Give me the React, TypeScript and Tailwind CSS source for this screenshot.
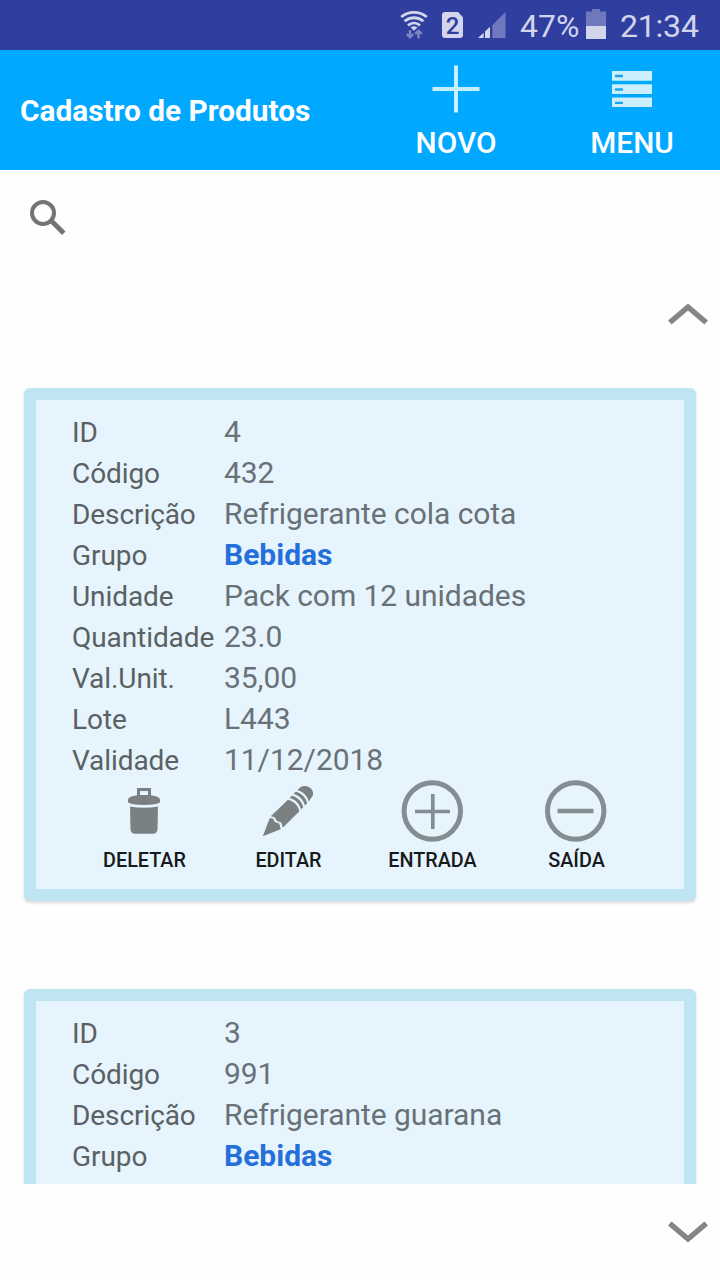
import type { ReactNode } from 'react';

type Product = {
  id: string;
  codigo: string;
  descricao: string;
  grupo: string;
  unidade?: string;
  quantidade?: string;
  valorUnitario?: string;
  lote?: string;
  validade?: string;
};

const products: Product[] = [
  {
    id: '4',
    codigo: '432',
    descricao: 'Refrigerante cola cota',
    grupo: 'Bebidas',
    unidade: 'Pack com 12 unidades',
    quantidade: '23.0',
    valorUnitario: '35,00',
    lote: 'L443',
    validade: '11/12/2018',
  },
  {
    id: '3',
    codigo: '991',
    descricao: 'Refrigerante guarana',
    grupo: 'Bebidas',
  },
];

const fields: { key: keyof Product; label: string }[] = [
  { key: 'id', label: 'ID' },
  { key: 'codigo', label: 'Código' },
  { key: 'descricao', label: 'Descrição' },
  { key: 'grupo', label: 'Grupo' },
  { key: 'unidade', label: 'Unidade' },
  { key: 'quantidade', label: 'Quantidade' },
  { key: 'valorUnitario', label: 'Val.Unit.' },
  { key: 'lote', label: 'Lote' },
  { key: 'validade', label: 'Validade' },
];

function StatusBar() {
  return (
    <div className="flex h-[50px] shrink-0 items-center justify-end bg-[#303f9f] pr-[21px] text-[32px] text-[#d2d5ec]">
      <svg width="28" height="30" viewBox="0 0 28 30" fill="none" className="mr-[14px]">
        <g stroke="#d2d5ec" strokeWidth="2.8">
          <path d="M1.2 7C8.500 .8 19.500 .8 26.800 7" />
          <path d="M4.600 11.200c5.400-4.600 13.400-4.600 18.800 0" />
          <path d="M8 15.400c3.600-3 8.400-3 12 0" />
        </g>
        <path d="M10.600 17.400c2-1.600 4.800-1.600 6.800 0L14 20.800z" fill="#d2d5ec" />
        <g stroke="#7d86c4" strokeWidth="2.400">
          <path d="M10 20v7M6.700 24l3.300 3.400 3.300-3.400" />
          <path d="M18.500 28.500v-7M15.200 24l3.300-3.400 3.300 3.400" />
        </g>
      </svg>
      <div className="mr-[15px] flex h-[26px] w-[21px] items-center justify-center rounded-[3px] bg-[#d2d5ec] pt-0.5 text-[24px] font-medium text-[#303f9f] [clip-path:polygon(0_0,76%_0,100%_20%,100%_100%,0_100%)]">
        2
      </div>
      <svg width="28" height="26" viewBox="0 0 28 26" className="mr-[14px]">
        <path d="M14.300 13.200 27.500 0v26H14.300z" fill="#7079bd" />
        <path d="M0 26l5.600-5.200V26zM7 19.600l5-4.800V26H7z" fill="#d2d5ec" />
      </svg>
      <span className="mt-px w-[59px] leading-none whitespace-nowrap">47%</span>
      <svg width="20" height="30" viewBox="0 0 20 30" className="mt-[-2px] mr-[14px] ml-[7px]">
        <path d="M6 0h8v2.500h6V17H0V2.500h6z" fill="#7079bd" />
        <path d="M0 17h20v13H0z" fill="#d2d5ec" />
      </svg>
      <span className="mt-px w-[79px] leading-none tracking-[-0.2px]">21:34</span>
    </div>
  );
}

function HeaderButton({ label, children }: { label: string; children: ReactNode }) {
  return (
    <button className="flex h-full w-44 flex-col items-center text-[29.8px] font-medium text-white">
      <span className="flex h-[78px] items-center">{children}</span>
      <span className="leading-[30px]">{label}</span>
    </button>
  );
}

function Header() {
  return (
    <header className="flex h-[120px] shrink-0 items-center bg-[#00a9ff]">
      <h1 className="flex-1 pt-0.5 pl-5 text-[29.8px] font-bold whitespace-nowrap text-white">Cadastro de Produtos</h1>
      <HeaderButton label="NOVO">
        <svg width="48" height="48" viewBox="0 0 48 48" stroke="#c5f0fc" strokeWidth="4">
          <path d="M24 .5v47M.5 24h47" />
        </svg>
      </HeaderButton>
      <HeaderButton label="MENU">
        <svg width="40" height="36" viewBox="0 0 40 36">
          <path d="M0 0h40v9.700H0zM0 13.200h40v9.800H0zM0 26.500h40V36H0z" fill="#cceffc" />
          <path d="M3 5h8M3 18.500h8M3 31.800h8" stroke="#18a5ed" strokeWidth="2.300" />
        </svg>
      </HeaderButton>
    </header>
  );
}

function ActionButton({ label, children }: { label: string; children: ReactNode }) {
  return (
    <button className="flex w-36 flex-col items-center text-[19.8px] font-medium text-[#17191b]">
      <span className="flex h-[62px] items-center">{children}</span>
      <span className="mt-[7px] pl-px leading-6">{label}</span>
    </button>
  );
}

function ProductCard({ product }: { product: Product }) {
  return (
    <article className="h-[513px] shrink-0 rounded-md border-12 border-[#bfe5f2] bg-[#e6f5fd] pt-[11px] pl-9 shadow-[0_2px_3px_rgba(0,0,0,0.15)]">
      {fields.map(({ key, label }) => (
        <div key={key} className="flex h-[41px] items-center">
          <span className="w-[152px] pt-0.5 text-[28px] tracking-[-0.08px] text-[#5b6063]">{label}</span>
          <span
            className={
              key === 'grupo'
                ? 'text-[30px] font-bold text-[#256fd8]'
                : 'text-[30px] tracking-[-0.05px] text-[#697177]'
            }
          >
            {product[key]}
          </span>
        </div>
      ))}
      <div className="flex">
        <ActionButton label="DELETAR">
          <svg width="32" height="46" viewBox="0 0 32 46" fill="#7b8083">
            <path d="M9 8V0h14v8h-3V3h-8v5z" />
            <path d="M0 12C0 8.500 6 7 16 7s16 1.500 16 5v2.500C28 16.300 22 17 16 17S4 16.300 0 14.500z" />
            <path d="M2 18.500c8 1.600 20 1.600 28 0l-.5 23c-.2 2.800-2 4.300-4.600 4.300H7.100c-2.600 0-4.400-1.500-4.600-4.300z" />
          </svg>
        </ActionButton>
        <ActionButton label="EDITAR">
          <svg width="52" height="52" viewBox="0 0 52 52" fill="#7b8083">
            <path d="M.8 51.300 7.800 33l3.400.8 1.500 3.100 4.500 1.500 1.500 5.800z" />
            <path
              d="M9.500 31 26 15.300c5.500 1.200 9.600 5.200 11 11L21 42l-1.300-4.700-4.800-1.700-1.700-3.600z"
              stroke="#7b8083"
              strokeWidth=".9"
            />
            <path d="M27.500 13 29.800 10.700c5.500 1.200 10.200 5.700 11.500 11.500L39 24.500C37.500 18.500 33 14.200 27.500 13zM31.400 9.100 33.700 6.800c5.500 1.200 10.200 5.700 11.500 11.500l-2.300 2.300C41.400 14.600 36.900 10.300 31.400 9.100zM35.300 5.200l2.200-2.200C41.500-.2 46.500.8 49.500 4.300c2.500 3.200 2 6.200-.5 8.700L46.800 16.700C45.300 10.500 41 6.400 35.300 5.200z" />
          </svg>
        </ActionButton>
        <ActionButton label="ENTRADA">
          <svg width="62" height="62" viewBox="0 0 62 62" fill="none" stroke="#848d91">
            <circle cx="31.300" cy="31" r="28.200" strokeWidth="5" />
            <path d="M31.800 14v35M14 31.500h35" strokeWidth="3.700" />
          </svg>
        </ActionButton>
        <ActionButton label="SAÍDA">
          <svg width="62" height="62" viewBox="0 0 62 62" fill="none" stroke="#848d91">
            <circle cx="30.700" cy="31" r="28.200" strokeWidth="5" />
            <path d="M12.500 31h36" strokeWidth="4.300" />
          </svg>
        </ActionButton>
      </div>
    </article>
  );
}

export default function App() {
  return (
    <div className="flex h-[1280px] w-[720px] flex-col overflow-hidden bg-[#fefefe] font-[Roboto,sans-serif]">
      <StatusBar />
      <Header />

      {/* Search */}
      <div className="h-[133px] shrink-0 pt-[29px] pl-[29px]">
        <svg width="38" height="38" viewBox="0 0 38 38" fill="none" stroke="#737373">
          <circle cx="14" cy="14" r="11" strokeWidth="4" />
          <path d="m23 22.500 11.800 11.800" strokeWidth="4.800" />
        </svg>
      </div>

      {/* Scroll up */}
      <div className="flex h-[85px] shrink-0 justify-end pr-3">
        <svg width="40" height="23" viewBox="0 0 40 23" fill="none" stroke="#858585" strokeWidth="5.500">
          <path d="M1.800 19.500 20 4l18.200 15.500" />
        </svg>
      </div>

      <main className="flex h-[796px] shrink-0 flex-col gap-[88px] overflow-hidden px-6">
        {products.map((product) => (
          <ProductCard key={product.id} product={product} />
        ))}
      </main>

      {/* Scroll down */}
      <div className="flex flex-1 justify-end pt-9 pr-3">
        <svg width="40" height="23" viewBox="0 0 40 23" fill="none" stroke="#858585" strokeWidth="5.500">
          <path d="M1.800 3.500 20 19 38.200 3.500" />
        </svg>
      </div>
    </div>
  );
}
